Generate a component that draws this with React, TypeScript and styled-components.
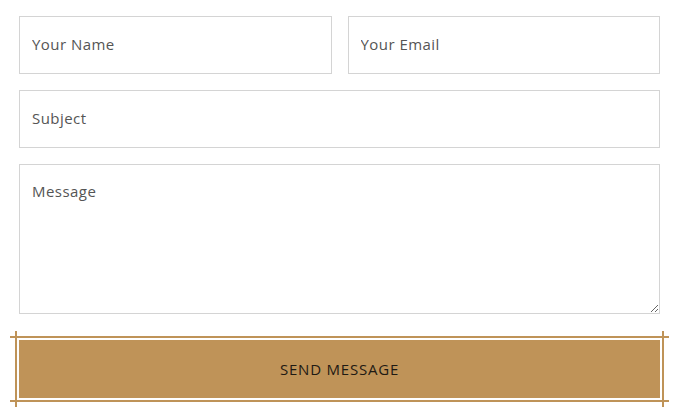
import React from "react";
import styled, { createGlobalStyle } from "styled-components";

const GlobalStyle = createGlobalStyle`
  html, body {
    margin: 0;
    padding: 0;
    background: #ffffff;
  }
  body {
    min-height: 412px;
    font-family: "Open Sans", "Liberation Sans", sans-serif;
  }
`;

const Form = styled.form`
  display: flex;
  flex-direction: column;
  gap: 16px;
  width: 641px;
  padding: 16px 0 14px 19px;
`;

const Row = styled.div`
  display: grid;
  grid-template-columns: 1fr 1fr;
  gap: 16px;
`;

const fieldStyles = `
  box-sizing: border-box;
  width: 100%;
  border: 1px solid #d4d4d4;
  background: #fff;
  font-family: "Open Sans", "Liberation Sans", sans-serif;
  font-size: 15px;
  letter-spacing: 0.45px;
  color: #555;
  padding: 0 12px;
  outline: none;
  &::placeholder {
    color: #555;
    opacity: 1;
  }
`;

const Input = styled.input`
  ${fieldStyles}
  height: 58px;
  padding-bottom: 2px;
`;

const TextArea = styled.textarea`
  ${fieldStyles}
  height: 150px;
  padding-top: 16px;
  resize: vertical;
  display: block;
`;

const ButtonFrame = styled.div`
  position: relative;
  margin-top: 10px;

  &::before {
    content: "";
    position: absolute;
    top: -4px;
    bottom: -4px;
    left: -9px;
    right: -9px;
    border-top: 2px solid #bf9358;
    border-bottom: 2px solid #bf9358;
    pointer-events: none;
  }

  &::after {
    content: "";
    position: absolute;
    top: -9px;
    bottom: -9px;
    left: -4px;
    right: -4px;
    border-left: 2px solid #bf9358;
    border-right: 2px solid #bf9358;
    pointer-events: none;
  }
`;

const SendButton = styled.button`
  display: block;
  width: 100%;
  height: 58px;
  border: none;
  background: #bf9358;
  color: #1e1a14;
  font-family: "Open Sans", "Liberation Sans", sans-serif;
  font-size: 15px;
  letter-spacing: 0.8px;
  text-transform: uppercase;
  cursor: pointer;
`;

export default function App() {
  return (
    <>
      <GlobalStyle />
      <Form onSubmit={e => e.preventDefault()}>
        <Row>
          <Input type="text" placeholder="Your Name" />
          <Input type="email" placeholder="Your Email" />
        </Row>
        <Input type="text" placeholder="Subject" />
        <TextArea placeholder="Message" />
        <ButtonFrame>
          <SendButton type="submit">Send Message</SendButton>
        </ButtonFrame>
      </Form>
    </>
  );
}
